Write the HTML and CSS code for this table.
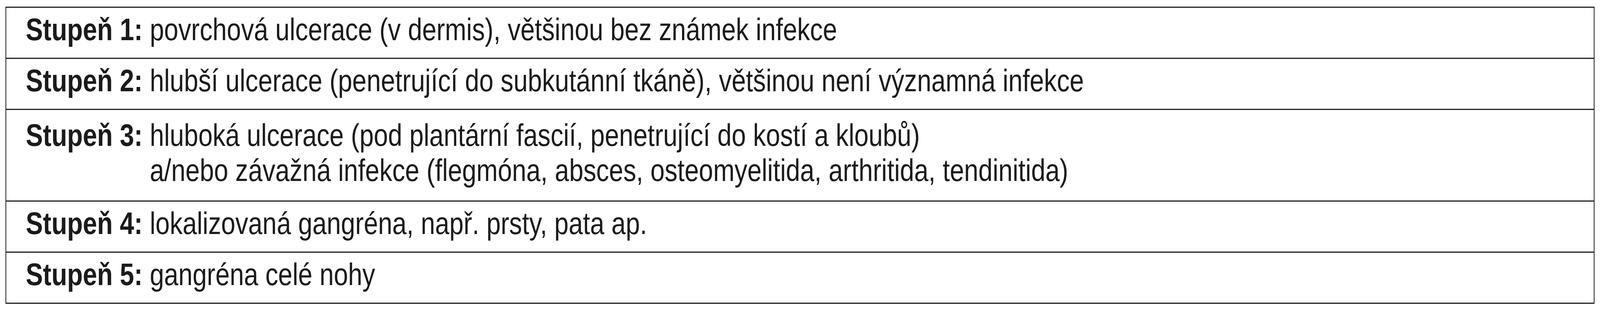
FILE: index.html
```html
<!DOCTYPE html>
<html lang="cs">
<head>
<meta charset="utf-8">
<title>Stupně</title>
<link rel="stylesheet" href="styles.css">
</head>
<body>
<div class="grades">
  <div class="row">
    <div class="row-text">
      <span class="label">Stupeň 1:</span>
      <span class="desc">povrchová ulcerace (v dermis), většinou bez známek infekce</span>
    </div>
  </div>
  <div class="row">
    <div class="row-text">
      <span class="label">Stupeň 2:</span>
      <span class="desc">hlubší ulcerace (penetrující do subkutánní tkáně), většinou není významná infekce</span>
    </div>
  </div>
  <div class="row row-tall">
    <div class="row-text">
      <span class="label">Stupeň 3:</span>
      <span class="desc">
        <span class="line">hluboká ulcerace (pod plantární fascií, penetrující do kostí a kloubů)</span>
        <span class="line">a/nebo závažná infekce (flegmóna, absces, osteomyelitida, arthritida, tendinitida)</span>
      </span>
    </div>
  </div>
  <div class="row">
    <div class="row-text">
      <span class="label">Stupeň 4:</span>
      <span class="desc">lokalizovaná gangréna, např. prsty, pata ap.</span>
    </div>
  </div>
  <div class="row">
    <div class="row-text">
      <span class="label">Stupeň 5:</span>
      <span class="desc">gangréna celé nohy</span>
    </div>
  </div>
</div>
</body>
</html>
```

FILE: styles.css
```css
:root {
  /* one horizontal pixel of the 4958px-wide design */
  --u: calc(100vw / 4958);
}

html, body {
  margin: 0;
  padding: 0;
  background: #ffffff;
  overflow: hidden;
}

body {
  font-family: "Liberation Sans", Arial, sans-serif;
  color: #1c1a1b;
}

.grades {
  box-sizing: border-box;
  width: calc(4924 * var(--u));
  margin: 17px 0 0 calc(17 * var(--u));
  border-style: solid;
  border-color: #231f20;
  border-width: 3px calc(3 * var(--u));
}

.row {
  padding: 11px 0 27px calc(61 * var(--u));
  border-top: 3px solid #231f20;
}

.row:first-child {
  border-top: none;
}

.row-tall {
  padding-top: 20px;
  padding-bottom: 32px;
}

/* text set on the design grid, fitted to the window width */
.row-text {
  display: flex;
  align-items: flex-start;
  column-gap: 0.278em;
  font-size: 79.5px;
  line-height: 90px;
  transform-origin: 0 0;
  transform: scaleX(0.8261);
  transform: scaleX(calc(tan(atan2(100vw, 100vh)) * 800 / 4958));
}

.label {
  font-weight: 700;
  white-space: nowrap;
}

.desc {
  font-weight: 400;
  white-space: nowrap;
}

.line {
  display: block;
}
```
